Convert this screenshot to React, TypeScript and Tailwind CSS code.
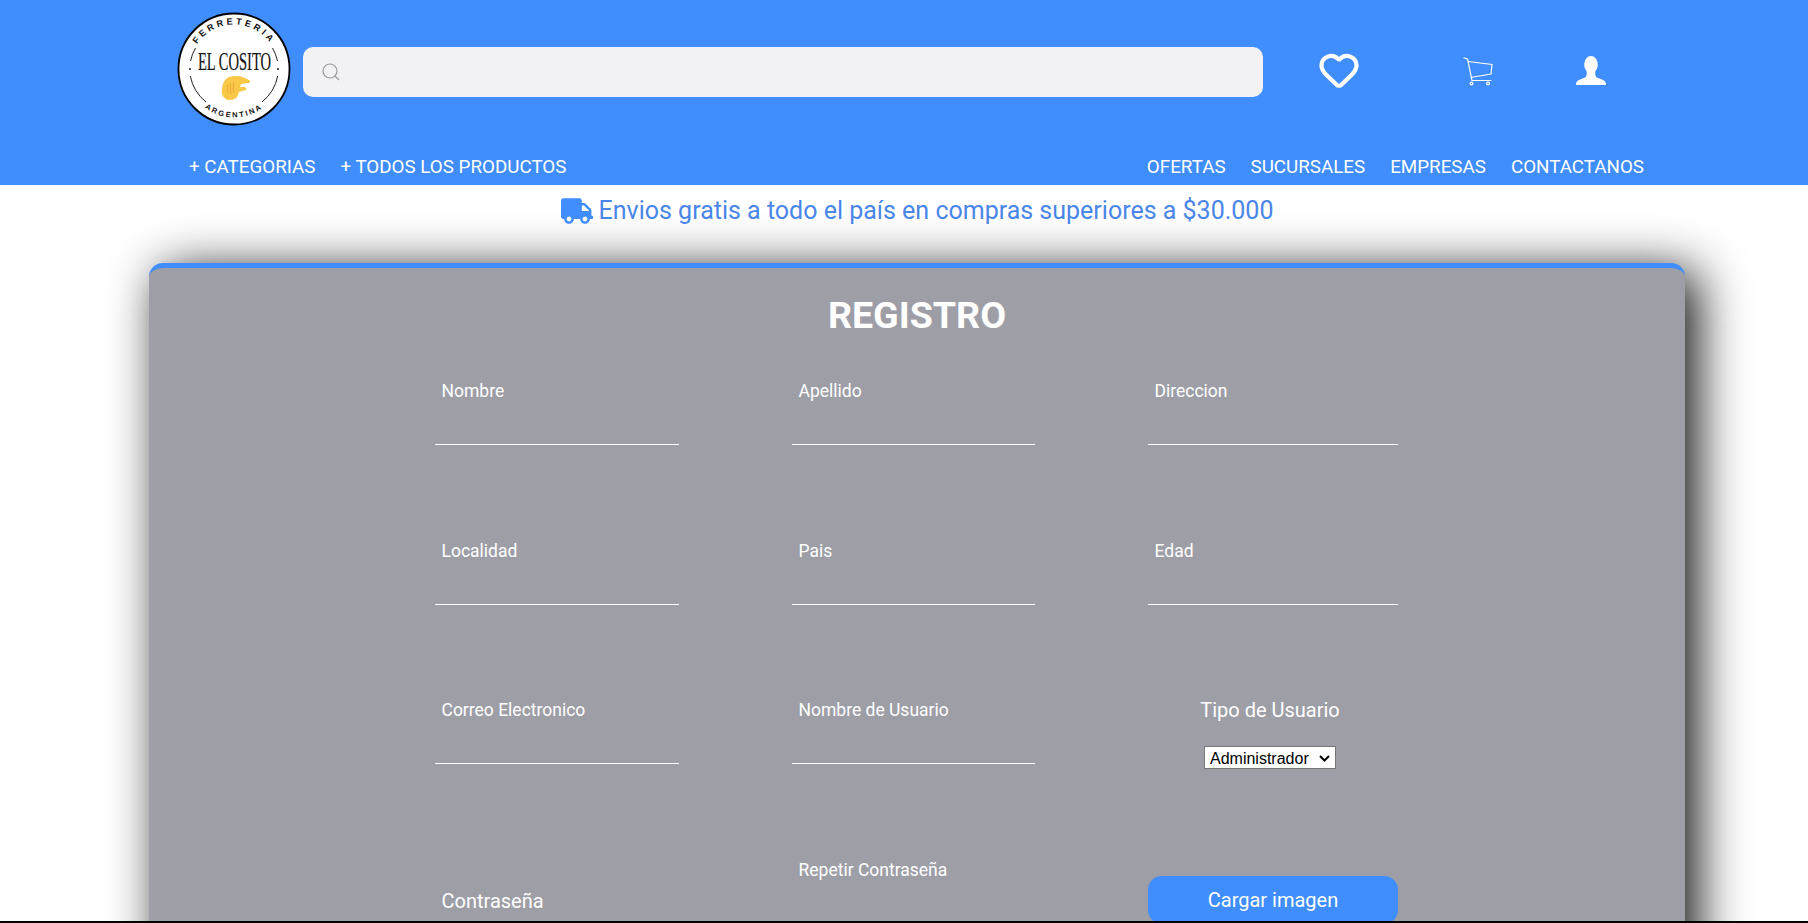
import { Heart } from "lucide-react";
import { FaTruck } from "react-icons/fa";

const Logo = () => (
  <svg width="114" height="114" viewBox="0 0 114 114" className="shrink-0">
    <defs>
      <path id="arcTop" d="M12.5 57 A44.5 44.5 0 0 1 101.5 57" />
      <path id="arcBottom" d="M8.5 57 A48.5 48.5 0 0 0 105.5 57" />
    </defs>
    <circle cx="57" cy="57" r="55.5" fill="#fff" stroke="#000" strokeWidth="1.8" />
    <text fontFamily="'Liberation Sans', sans-serif" fontSize="9" fontWeight="700" letterSpacing="3" fill="#111">
      <textPath href="#arcTop" startOffset="50%" textAnchor="middle">FERRETERIA</textPath>
    </text>
    <text fontFamily="'Liberation Sans', sans-serif" fontSize="7.5" fontWeight="700" letterSpacing="2" fill="#111">
      <textPath href="#arcBottom" startOffset="50%" textAnchor="middle">ARGENTINA</textPath>
    </text>
    <g fill="none" stroke="#222" strokeWidth="1">
      <path d="M18.5 36 A44 44 0 0 0 13.5 49" />
      <path d="M95.5 36 A44 44 0 0 1 100.5 49" />
      <path d="M13.3 64 A44 44 0 0 0 29 90" />
      <path d="M100.7 64 A44 44 0 0 1 85 90" />
    </g>
    <circle cx="13" cy="57" r="1" fill="#222" />
    <circle cx="101" cy="57" r="1" fill="#222" />
    <text
      transform="translate(57.5 58) scale(0.56 1)"
      textAnchor="middle"
      fontFamily="'Liberation Serif', serif"
      fontSize="26"
      stroke="#111"
      strokeWidth="0.2"
      fill="#111"
    >
      EL COSITO
    </text>
    <path
      d="M52 65 C58 63 64 64 68 66 L72 68 C74 69.5 73 71 71 71 L64 72 L63 75 L68 75 C70 76 70 78 67 78.5 L62 80 C61 85 58 88 53 88 C47 88 44 83 45 77 C45.5 71 48 67 52 65 Z"
      fill="#f9c846"
    />
    <path d="M51 73 C50 76 50 78 51 81 M54 72 C53 75 53 78 54 82 M57 71 C56 74 56 78 57 81" fill="none" stroke="#e8a13b" strokeWidth="0.9" />
  </svg>
);

const Cart = () => (
  <svg width="30" height="29" viewBox="0 0 30 29" fill="none" stroke="#fff" strokeWidth="1.2" className="shrink-0">
    <path d="M0.5 0.8 L4.5 2 L9 23.5 H28.5" />
    <path d="M5 4.5 L29 7.5 L28 17 L7.5 20.5" />
    <circle cx="8.5" cy="26.5" r="1.4" />
    <circle cx="25" cy="26.5" r="1.4" />
  </svg>
);

const User = () => (
  <svg width="30" height="29" viewBox="0 0 30 29" fill="#fff" className="shrink-0">
    <ellipse cx="15" cy="8.5" rx="6.8" ry="8.5" />
    <path d="M0 29 C0 25 2 24 8 22 C11 21 11 18 10.5 14 H19.5 C19 18 19 21 22 22 C28 24 30 25 30 29 Z" />
  </svg>
);

const Field = ({ label, width = "w-[244px]" }: { label: string; width?: string }) => (
  <div className="flex flex-col">
    <label className="pl-[6.5px] text-[17.5px] leading-6 text-white">{label}</label>
    <input className={`mt-[18px] h-[24px] border-b border-white bg-transparent outline-none ${width}`} />
  </div>
);

export default function App() {
  return (
    <div className="relative h-[923px] overflow-hidden bg-white font-['Roboto',sans-serif]">
      <header className="h-[185px] bg-[#408dfd]">
        <div className="flex h-[144px] items-center pl-[177px]">
          <div className="-mt-[6px]">
            <Logo />
          </div>
          <div className="ml-[12px] flex h-[50px] w-[960px] items-center rounded-[10px] bg-[#f2f2f5] pl-[19px]">
            <svg width="18" height="18" viewBox="0 0 18 18" fill="none" stroke="#9a9a9f" strokeWidth="1.2">
              <circle cx="8" cy="8" r="7" />
              <path d="M13 13 L17 17" />
            </svg>
          </div>
          <div className="-mt-[5px] ml-[53px] flex w-[46px] justify-center">
            <Heart size={42} color="#fff" strokeWidth={2.4} />
          </div>
          <div className="-mt-[2px] ml-[101px]">
            <Cart />
          </div>
          <div className="-mt-[4px] ml-[83px]">
            <User />
          </div>
        </div>
        <nav className="flex items-center justify-between pl-[189px] pr-[164px] text-[18.8px] leading-[46px] text-white">
          <div className="flex gap-[25px]">
            <a>+ CATEGORIAS</a>
            <a>+ TODOS LOS PRODUCTOS</a>
          </div>
          <div className="flex gap-[25px]">
            <a>OFERTAS</a>
            <a>SUCURSALES</a>
            <a>EMPRESAS</a>
            <a>CONTACTANOS</a>
          </div>
        </nav>
      </header>

      <div className="flex h-[50px] items-center justify-center gap-[6px] pl-[26px] pt-[1px] text-[25px] text-[#4a86e8]">
        <FaTruck size={32} color="#408dfd" />
        <span>Envios gratis a todo el país en compras superiores a $30.000</span>
      </div>

      <main className="ml-[149px] mt-[28px] h-[900px] w-[1536px] rounded-[14px] border-t-[5px] border-[#408dfd] bg-[#9e9ea7] shadow-[12px_8px_50px_rgba(0,0,0,0.95)]">
        <h1 className="pt-[23px] text-center text-[37.6px] font-bold leading-[48px] text-white">REGISTRO</h1>
        <div className="mt-[40px] grid grid-cols-[357px_356px_250px] grid-rows-[160px_159px_160px_auto] pl-[286px]">
          <Field label="Nombre" />
          <Field label="Apellido" width="w-[243px]" />
          <Field label="Direccion" width="w-[250px]" />
          <Field label="Localidad" />
          <Field label="Pais" width="w-[243px]" />
          <Field label="Edad" width="w-[250px]" />
          <Field label="Correo Electronico" />
          <Field label="Nombre de Usuario" width="w-[243px]" />
          <div className="flex flex-col items-center pr-[6px]">
            <span className="text-[20px] leading-6 text-white">Tipo de Usuario</span>
            <div className="relative mt-[24px] h-[23px] w-[132px]">
              <select className="h-full w-full appearance-none border border-[#767676] bg-white pl-[5px] font-['Liberation_Sans',sans-serif] text-[16px] text-black">
                <option>Administrador</option>
              </select>
              <svg width="11" height="7" viewBox="0 0 11 7" fill="none" stroke="#000" strokeWidth="2" className="absolute right-[6px] top-[9px]">
                <path d="M1 1 L5.5 5.5 L10 1" />
              </svg>
            </div>
          </div>
          <div className="pl-[6.5px] pt-[31px] text-[20px] leading-6 text-white">Contraseña</div>
          <Field label="Repetir Contraseña" width="w-[243px]" />
          <button className="mt-[18px] h-[48px] w-[250px] rounded-[14px] bg-[#408dfd] text-[20px] text-white">Cargar imagen</button>
        </div>
      </main>

      <div className="absolute inset-x-0 bottom-0 h-[2px] bg-black" />
    </div>
  );
}
